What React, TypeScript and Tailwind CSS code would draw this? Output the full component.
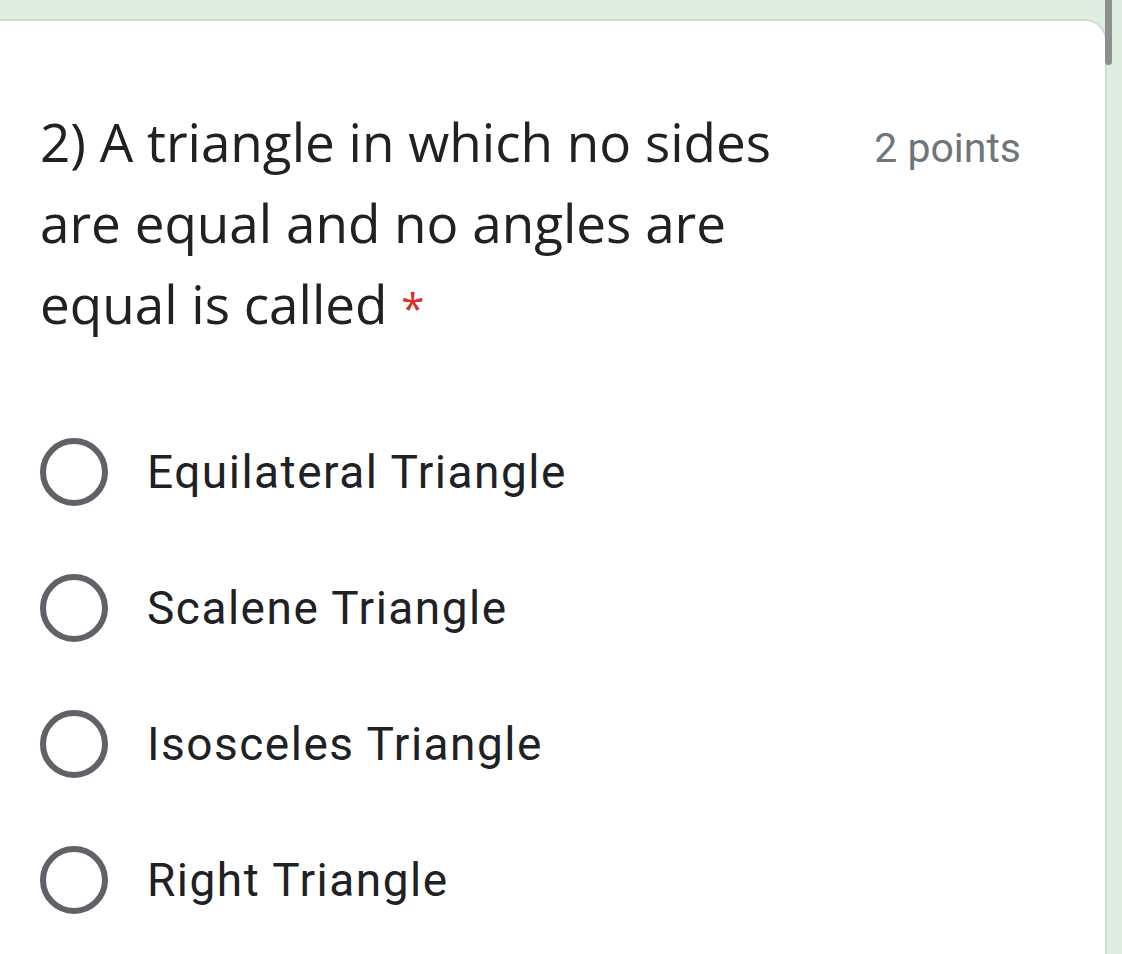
import React from 'react';

const options = [
  'Equilateral Triangle',
  'Scalene Triangle',
  'Isosceles Triangle',
  'Right Triangle',
];

function Radio() {
  return (
    <span className="block h-[68px] w-[68px] shrink-0 rounded-full border-[6px] border-[#5f6368]" />
  );
}

export default function App() {
  return (
    <div className="relative h-[954px] w-[1122px] overflow-hidden bg-[#e0ede1]">
      {/* scrollbar thumb */}
      <div className="absolute right-[10px] top-0 h-[65px] w-[7px] rounded-b-full bg-[#8c918d]" />
      <div className="flex h-full pt-[19px]">
        <div className="h-full w-[1107px] rounded-tr-[22px] border-r-2 border-t-2 border-[#d3dcd4] bg-white">
          <div className="flex items-baseline justify-between pl-[40px] pr-[84px] pt-[80px]">
            <h2
              className="w-[790px] text-[53px] leading-[81px] text-[#202124]"
              style={{ fontFamily: '"Open Sans", sans-serif' }}
            >
              2) A triangle in which no sides are equal and no angles are equal is called{' '}
              <span className="text-[42px] leading-none text-[#d93025]">*</span>
            </h2>
            <span
              className="text-[41px] text-[#70757a]"
              style={{ fontFamily: 'Roboto, sans-serif' }}
            >
              2 points
            </span>
          </div>
          <ul className="mt-[94px] flex flex-col gap-[68px] pl-[40px]">
            {options.map((o) => (
              <li key={o} className="flex h-[68px] items-center gap-[39px]">
                <Radio />
                <span
                  className="text-[46px] tracking-[1.5px] text-[#202124]"
                  style={{ fontFamily: 'Roboto, sans-serif' }}
                >
                  {o}
                </span>
              </li>
            ))}
          </ul>
        </div>
      </div>
    </div>
  );
}
